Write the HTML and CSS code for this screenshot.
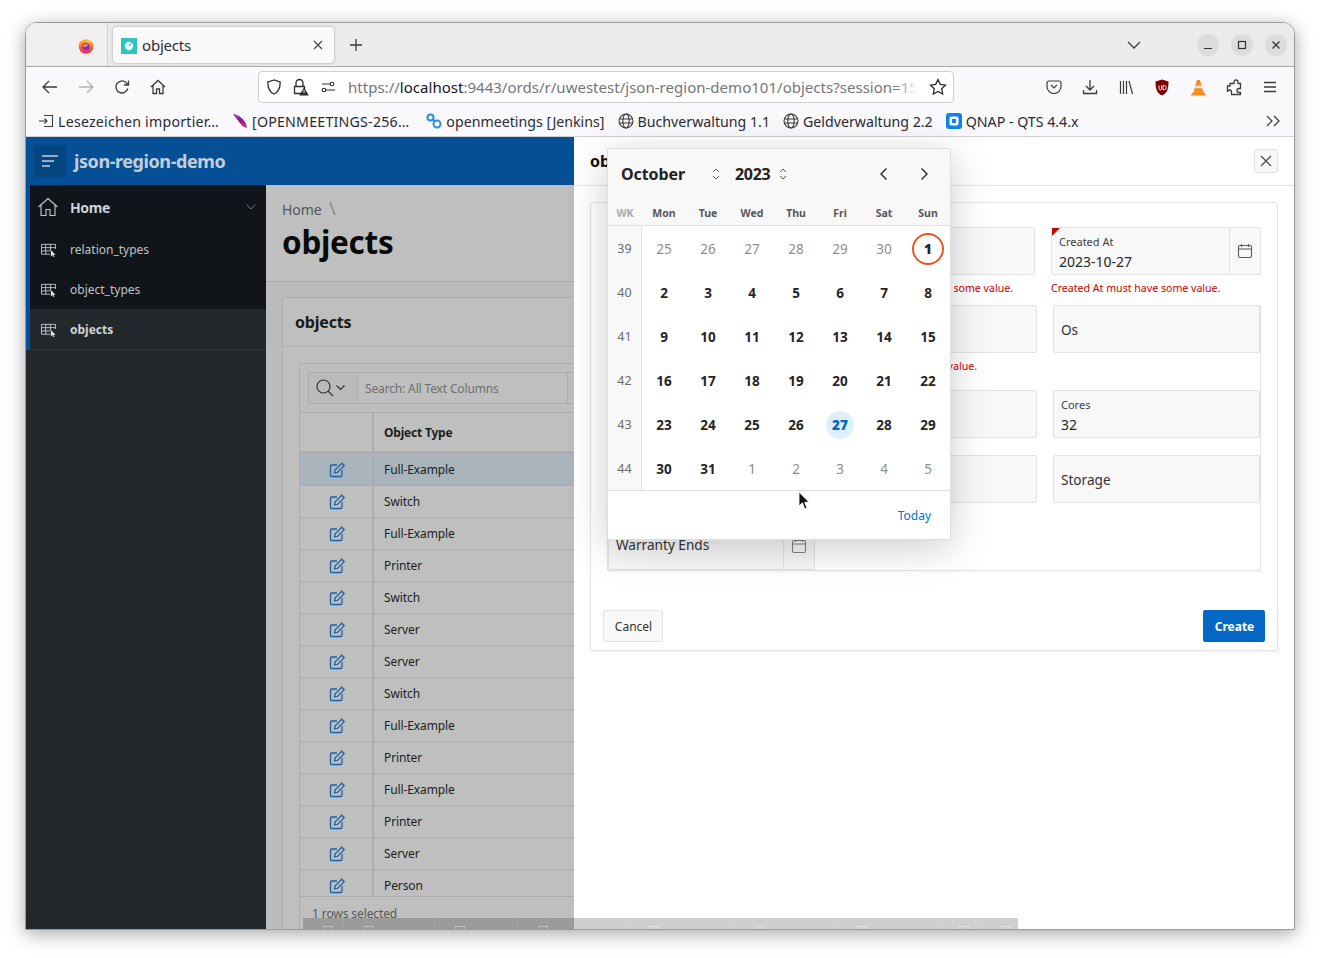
FILE: index.html
```html
<!DOCTYPE html>
<html lang="en">
<head>
  <meta charset="UTF-8">
  <title>objects</title>
  <link rel="stylesheet" href="styles.css">
</head>
<body>
  <svg class="defs" width="0" height="0">
    <defs>
      <linearGradient id="fox" x1="0" y1="0" x2="0" y2="1">
        <stop offset="0" stop-color="#ffbd2e"/>
        <stop offset=".5" stop-color="#ff6a2b"/>
        <stop offset="1" stop-color="#e5256a"/>
      </linearGradient>
      <symbol id="globe" viewBox="0 0 16 16"><g fill="none" stroke="#3a3a3f" stroke-width="1.1"><circle cx="8" cy="8" r="7"/><ellipse cx="8" cy="8" rx="3.2" ry="7"/><path d="M1 6h14M1 10h14"/></g></symbol>
      <symbol id="cal" viewBox="0 0 16 16"><g fill="none" stroke="#5a5a5a" stroke-width="1.1"><rect x="1.5" y="2.5" width="13" height="12" rx="1.5"/><path d="M1.5 6h13M4.5 1v3M11.5 1v3"/></g></symbol>
      <symbol id="edit" viewBox="0 0 16 16"><g fill="none" stroke="#1b62a8" stroke-width="1.3"><path d="M8 3H2.5A1 1 0 0 0 1.5 4v9.5a1 1 0 0 0 1 1H12a1 1 0 0 0 1-1V8"/><path d="M5.5 10.8 6 8 12.8 1.2l2.4 2.4L8.4 10.4z"/></g></symbol>
      <symbol id="menuicon" viewBox="0 0 18 16"><g fill="none" stroke="#bfc4c8" stroke-width="1"><path d="M1.5 2.5h15M1.5 6h15M1.5 9.5h9M1.5 13h9M1.5 2.5v10.5M6 2.5V13M11 2.5v7M16.5 2.5v5"/></g><path d="M11.5 8.5v7l1.7-1.6 1.2 2.4 1-.5-1.2-2.3h2.3z" fill="#e4e6e8"/></symbol>
      <symbol id="updown" viewBox="0 0 10 14"><path d="M2 5 5 2l3 3M2 9l3 3 3-3" fill="none" stroke="#555" stroke-width="1"/></symbol>
    </defs>
  </svg>

  <div class="window">
    <div class="tabbar">
      <div class="ffview">
        <svg width="16" height="16" viewBox="0 0 16 16"><circle cx="8" cy="8.5" r="7.3" fill="url(#fox)"/><path d="M9 .5c2 1.500 3.500 3 3.500 5l-3-2z" fill="#ffcf3f"/><circle cx="8" cy="8.700" r="3.600" fill="#7a2fd0"/><path d="M5 8c1-2 4-2.500 6-1-1 0-2 .5-2.500 1.500-.5.500-2.500 1-3.500-.5z" fill="#ff9a3c"/></svg>
      </div>
      <div class="tab">
        <span class="favicon"><svg width="16" height="16" viewBox="0 0 16 16"><rect width="16" height="16" fill="#2ec4bd"/><circle cx="8" cy="8" r="4.200" fill="#e8fbfa"/><path d="M8 8l2-2.500" stroke="#2ec4bd" stroke-width="1.200"/></svg></span>
        <span class="tab-title">objects</span>
        <svg class="tab-x" width="10" height="10" viewBox="0 0 10 10"><path d="M1 1l8 8M9 1l-8 8" stroke="#444" stroke-width="1.100"/></svg>
      </div>
      <svg class="plus" width="14" height="14" viewBox="0 0 14 14"><path d="M7 1v12M1 7h12" stroke="#3a3a3f" stroke-width="1.300"/></svg>
      <div class="tabbar-end">
        <svg class="alltabs" width="14" height="8" viewBox="0 0 14 8"><path d="M1 1l6 6 6-6" fill="none" stroke="#3a3a3f" stroke-width="1.300"/></svg>
        <span class="winbtn"><svg width="10" height="10" viewBox="0 0 10 10"><path d="M1 8.500h8" stroke="#333" stroke-width="1.200"/></svg></span>
        <span class="winbtn"><svg width="10" height="10" viewBox="0 0 10 10"><rect x="1.500" y="1.500" width="7" height="7" fill="none" stroke="#333" stroke-width="1.200"/></svg></span>
        <span class="winbtn"><svg width="10" height="10" viewBox="0 0 10 10"><path d="M1.500 1.500l7 7M8.500 1.500l-7 7" stroke="#333" stroke-width="1.300"/></svg></span>
      </div>
    </div>

    <div class="navbar">
      <span class="navbtn"><svg width="16" height="14" viewBox="0 0 16 14"><path d="M7 1 1 7l6 6M1 7h14" fill="none" stroke="#3a3a3f" stroke-width="1.300"/></svg></span>
      <span class="navbtn"><svg width="16" height="14" viewBox="0 0 16 14"><path d="M9 1l6 6-6 6M15 7H1" fill="none" stroke="#b4b4b8" stroke-width="1.300"/></svg></span>
      <span class="navbtn"><svg width="16" height="16" viewBox="0 0 16 16"><path d="M13.800 9.500A6 6 0 1 1 12 3.500L14.500 6M14.500 1.500V6H10" fill="none" stroke="#3a3a3f" stroke-width="1.300"/></svg></span>
      <span class="navbtn"><svg width="16" height="16" viewBox="0 0 16 16"><path d="M1 8l7-6.500L15 8M3 6.500V14.500h3.500V10h3v4.500H13V6.500" fill="none" stroke="#3a3a3f" stroke-width="1.300"/></svg></span>
      <div class="urlbar">
        <svg width="16" height="16" viewBox="0 0 16 16"><path d="M8 1 1.800 3c0 6 1 10 6.200 12 5.200-2 6.200-6 6.200-12z" fill="none" stroke="#2b2b30" stroke-width="1.300"/></svg>
        <svg class="lock" width="16" height="18" viewBox="0 0 16 18"><path d="M3 9V5a3.500 3.500 0 0 1 7 0v4M1.500 8.500h10v7h-10z" fill="none" stroke="#2b2b30" stroke-width="1.300"/><path d="M11 9.500l4.800 8H6.200z" fill="#2b2b30"/><path d="M11 12v3" stroke="#fff" stroke-width="1"/></svg>
        <svg class="perm" width="15" height="12" viewBox="0 0 15 12"><g fill="none" stroke="#2b2b30" stroke-width="1.100"><circle cx="11" cy="3" r="1.800"/><circle cx="3" cy="9" r="1.800"/><path d="M1 3h8M5 9h9"/></g></svg>
        <span class="url"><span class="url-dim">https://</span>localhost<span class="url-dim">:9443/ords/r/uwestest/json-region-demo101/objects?session=151</span></span>
        <span class="url-fade"></span>
        <svg width="18" height="18" viewBox="0 0 18 18"><path d="M9 1.500l2.300 4.900 5.200.7-3.800 3.600 1 5.300L9 13.400l-4.700 2.600 1-5.300L1.500 7.100l5.200-.7z" fill="none" stroke="#2b2b30" stroke-width="1.300"/></svg>
      </div>
      <div class="nav-tools">
        <span class="toolbtn"><svg width="16" height="14" viewBox="0 0 16 14"><path d="M1 3a2 2 0 0 1 2-2h10a2 2 0 0 1 2 2v3.500a7 7 0 0 1-14 0z" fill="none" stroke="#3a3a3f" stroke-width="1.200"/><path d="M5 5l3 3 3-3" fill="none" stroke="#3a3a3f" stroke-width="1.200"/></svg></span>
        <span class="toolbtn"><svg width="16" height="16" viewBox="0 0 16 16"><path d="M8 1v10M4 7l4 4 4-4M1.500 11v3.500h13V11" fill="none" stroke="#3a3a3f" stroke-width="1.300"/></svg></span>
        <span class="toolbtn"><svg width="15" height="15" viewBox="0 0 15 15"><path d="M1.500 1v13M4.500 1v13M7.500 1v13M10 1l3.500 13" fill="none" stroke="#3a3a3f" stroke-width="1.200"/></svg></span>
        <span class="toolbtn"><svg width="16" height="17" viewBox="0 0 16 17"><path d="M8 .5 1.500 2.500c0 7 1 11.500 6.500 14 5.500-2.500 6.500-7 6.500-14z" fill="#800000"/><path d="M5 6.500v3.200a1.300 1.300 0 0 0 2.600 0V6.500M9 6.500v4.200h1.200a2.100 2.100 0 0 0 0-4.200z" fill="none" stroke="#fff" stroke-width=".9"/></svg></span>
        <span class="toolbtn"><svg width="17" height="17" viewBox="0 0 17 17"><path d="M7 1h3l3.200 11.500H3.800z" fill="#f58a1f"/><path d="M5.600 7.200l5.800-1.400.8 3.400H5z" fill="#fde2c4"/><path d="M3.800 12.500h9.400L16.500 16.500H.5z" fill="#f58a1f"/></svg></span>
        <span class="toolbtn"><svg width="16" height="17" viewBox="0 0 16 17"><path d="M1.500 7H4V4.500h4V3a2 2 0 0 1 4 0v1.500h2.500v5H13a2 2 0 0 0 0 4h1.500V15.500h-9V13a1.800 1.800 0 0 0-4 0z" fill="none" stroke="#3a3a3f" stroke-width="1.300"/></svg></span>
        <span class="toolbtn"><svg width="14" height="12" viewBox="0 0 14 12"><path d="M1 1.500h12M1 6h12M1 10.500h12" stroke="#3a3a3f" stroke-width="1.300"/></svg></span>
      </div>
    </div>

    <div class="bookmarks">
      <span class="bm bm-wide"><svg width="16" height="14" viewBox="0 0 16 14"><path d="M6 1.500h8.500v11H6M1 7h8M6.500 4.500 9 7 6.500 9.500" fill="none" stroke="#3a3a3f" stroke-width="1.100"/></svg>Lesezeichen importier…</span>
      <span class="bm bm-wide"><svg width="16" height="16" viewBox="0 0 16 16"><path d="M1 1c5 .5 10 4 13 10l-3 2.500C8 10 4 5 1 1z" fill="#8a1f9c"/><path d="M8 8.500c1.500 2 3 3.500 3.500 5l3.500 1.500-1-4z" fill="#d8205a"/><path d="M2 1.500c2 .5 4 1.500 5 3.500z" fill="#f0903a"/></svg>[OPENMEETINGS-256…</span>
      <span class="bm bm-link"><svg width="16" height="16" viewBox="0 0 16 16"><g fill="none" stroke="#2a8fe0" stroke-width="2"><circle cx="4.500" cy="4.500" r="3"/><circle cx="11" cy="11" r="3.500"/><path d="M7 6.500l2 2"/></g></svg>openmeetings [Jenkins]</span>
      <span class="bm"><svg width="16" height="16"><use href="#globe"/></svg>Buchverwaltung 1.1</span>
      <span class="bm"><svg width="16" height="16"><use href="#globe"/></svg>Geldverwaltung 2.2</span>
      <span class="bm"><svg width="16" height="16" viewBox="0 0 16 16"><rect width="16" height="16" rx="3" fill="#0f83ee"/><rect x="3.500" y="3.500" width="9" height="9" rx="2" fill="#fff"/><rect x="6" y="6" width="4" height="4" fill="#0f83ee"/></svg>QNAP - QTS 4.4.x</span>
      <svg class="bm-more" width="15" height="12" viewBox="0 0 15 12"><path d="M1 1l5 5-5 5M8 1l5 5-5 5" fill="none" stroke="#3a3a3f" stroke-width="1.200"/></svg>
    </div>

    <div class="app">
      <div class="app-header">
        <span class="hamburger"><svg width="16" height="12" viewBox="0 0 16 12"><path d="M0 1h16M0 6h12M0 11h8" stroke="#c3cedb" stroke-width="1.600"/></svg></span>
        <span class="app-name">json-region-demo</span>
      </div>
      <div class="app-body">
        <nav class="sidebar">
          <div class="nav-tree">
            <div class="nav-item nav-home">
              <svg width="20" height="20" viewBox="0 0 20 20"><path d="M0.500 10 10 1.500 19.500 10M3 8v10.500h5v-6h4v6h5V8" fill="none" stroke="#c8ccd0" stroke-width="1.100"/></svg>
              <span>Home</span>
              <svg class="nav-caret" width="10" height="6" viewBox="0 0 10 6"><path d="M.5.500 5 5 9.500.5" fill="none" stroke="#70757a" stroke-width="1"/></svg>
            </div>
            <div class="nav-item"><svg width="17" height="15"><use href="#menuicon"/></svg><span>relation_types</span></div>
            <div class="nav-item"><svg width="17" height="15"><use href="#menuicon"/></svg><span>object_types</span></div>
            <div class="nav-item nav-current"><svg width="17" height="15"><use href="#menuicon"/></svg><span>objects</span></div>
          </div>
        </nav>

        <main class="page">
          <div class="page-head">
            <div class="crumbs">Home <i>\</i></div>
            <h1>objects</h1>
          </div>
          <section class="region">
            <h2>objects</h2>
            <div class="grid-wrap">
              <div class="ig">
                <div class="ig-toolbar">
                  <div class="ig-search">
                    <span class="ig-searchbtn">
                      <svg width="18" height="18" viewBox="0 0 18 18"><circle cx="7.500" cy="7.500" r="6.500" fill="none" stroke="#2f2f2f" stroke-width="1.100"/><path d="M12 12l5 5" stroke="#2f2f2f" stroke-width="1.100"/></svg>
                      <svg width="9" height="6" viewBox="0 0 9 6"><path d="M.5.500 4.500 4.500 8.500.5" fill="none" stroke="#2f2f2f" stroke-width="1.100"/></svg>
                    </span>
                    <span class="ig-input">Search: All Text Columns</span>
                    <span class="ig-next"></span>
                  </div>
                </div>
                <div class="ig-head"><span class="ig-cell-edit"></span><span class="ig-cell">Object Type</span></div>
                <div class="ig-row ig-row-sel"><span class="ig-cell-edit"><svg width="16" height="16"><use href="#edit"/></svg></span><span class="ig-cell">Full-Example</span></div>
                <div class="ig-row"><span class="ig-cell-edit"><svg width="16" height="16"><use href="#edit"/></svg></span><span class="ig-cell">Switch</span></div>
                <div class="ig-row"><span class="ig-cell-edit"><svg width="16" height="16"><use href="#edit"/></svg></span><span class="ig-cell">Full-Example</span></div>
                <div class="ig-row"><span class="ig-cell-edit"><svg width="16" height="16"><use href="#edit"/></svg></span><span class="ig-cell">Printer</span></div>
                <div class="ig-row"><span class="ig-cell-edit"><svg width="16" height="16"><use href="#edit"/></svg></span><span class="ig-cell">Switch</span></div>
                <div class="ig-row"><span class="ig-cell-edit"><svg width="16" height="16"><use href="#edit"/></svg></span><span class="ig-cell">Server</span></div>
                <div class="ig-row"><span class="ig-cell-edit"><svg width="16" height="16"><use href="#edit"/></svg></span><span class="ig-cell">Server</span></div>
                <div class="ig-row"><span class="ig-cell-edit"><svg width="16" height="16"><use href="#edit"/></svg></span><span class="ig-cell">Switch</span></div>
                <div class="ig-row"><span class="ig-cell-edit"><svg width="16" height="16"><use href="#edit"/></svg></span><span class="ig-cell">Full-Example</span></div>
                <div class="ig-row"><span class="ig-cell-edit"><svg width="16" height="16"><use href="#edit"/></svg></span><span class="ig-cell">Printer</span></div>
                <div class="ig-row"><span class="ig-cell-edit"><svg width="16" height="16"><use href="#edit"/></svg></span><span class="ig-cell">Full-Example</span></div>
                <div class="ig-row"><span class="ig-cell-edit"><svg width="16" height="16"><use href="#edit"/></svg></span><span class="ig-cell">Printer</span></div>
                <div class="ig-row"><span class="ig-cell-edit"><svg width="16" height="16"><use href="#edit"/></svg></span><span class="ig-cell">Server</span></div>
                <div class="ig-row ig-row-last"><span class="ig-cell-edit"><svg width="16" height="16"><use href="#edit"/></svg></span><span class="ig-cell">Person</span></div>
                <div class="ig-foot">1 rows selected</div>
              </div>
            </div>
          </section>
        </main>
      </div>

      <aside class="drawer">
        <div class="drawer-head">
          <span class="drawer-title">objects</span>
          <span class="drawer-close"><svg width="12" height="12" viewBox="0 0 12 12"><path d="M1 1l10 10M11 1 1 11" stroke="#444" stroke-width="1.100"/></svg></span>
        </div>
        <div class="drawer-body">
          <div class="form-card">
            <div class="form-top">
              <div class="field-col"><div class="field field-req"></div></div>
              <div class="field-col">
                <div class="field"></div>
                <div class="err err-mid">e some value.</div>
              </div>
              <div class="field-col">
                <div class="field-split field-req">
                  <div class="field-main"><label>Created At</label><span class="value">2023-10-27</span></div>
                  <span class="cal-btn"><svg width="16" height="16"><use href="#cal"/></svg></span>
                </div>
                <div class="err">Created At must have some value.</div>
              </div>
            </div>
            <div class="form-nested">
              <div class="nested-row nested-first">
                <div class="field-col"><div class="field"></div><div class="err err-left">value.</div></div>
                <div class="field"><span class="placeholder">Os</span></div>
              </div>
              <div class="nested-row nested-second">
                <div class="field"></div>
                <div class="field"><label>Cores</label><span class="value">32</span></div>
              </div>
              <div class="nested-row nested-third">
                <div class="field"></div>
                <div class="field"><span class="placeholder">Storage</span></div>
              </div>
              <div class="warranty">
                <div class="field-main"><span class="placeholder">Warranty Ends</span></div>
                <span class="cal-btn"><svg width="16" height="16"><use href="#cal"/></svg></span>
              </div>
            </div>
            <div class="form-actions">
              <button class="btn">Cancel</button>
              <button class="btn btn-hot">Create</button>
            </div>
          </div>
        </div>
      </aside>

      <div class="calendar">
        <div class="cal-head">
          <span class="cal-month">October</span>
          <svg class="cal-updown1" width="10" height="14"><use href="#updown"/></svg>
          <span class="cal-year">2023</span>
          <svg class="cal-updown2" width="10" height="14"><use href="#updown"/></svg>
          <svg class="cal-prev" width="9" height="14" viewBox="0 0 9 14"><path d="M7.500 1.500 2 7l5.500 5.500" fill="none" stroke="#262626" stroke-width="1.400"/></svg>
          <svg class="cal-nxt" width="9" height="14" viewBox="0 0 9 14"><path d="M1.500 1.500 7 7l-5.500 5.500" fill="none" stroke="#262626" stroke-width="1.400"/></svg>
        </div>
        <div class="cal-grid cal-days">
          <span class="wk-h">WK</span><span>Mon</span><span>Tue</span><span>Wed</span><span>Thu</span><span>Fri</span><span>Sat</span><span>Sun</span>
        </div>
        <div class="cal-grid cal-week"><span class="wk">39</span><span class="off">25</span><span class="off">26</span><span class="off">27</span><span class="off">28</span><span class="off">29</span><span class="off">30</span><span><b class="today">1</b></span></div>
        <div class="cal-grid cal-week"><span class="wk">40</span><span>2</span><span>3</span><span>4</span><span>5</span><span>6</span><span>7</span><span>8</span></div>
        <div class="cal-grid cal-week"><span class="wk">41</span><span>9</span><span>10</span><span>11</span><span>12</span><span>13</span><span>14</span><span>15</span></div>
        <div class="cal-grid cal-week"><span class="wk">42</span><span>16</span><span>17</span><span>18</span><span>19</span><span>20</span><span>21</span><span>22</span></div>
        <div class="cal-grid cal-week"><span class="wk">43</span><span>23</span><span>24</span><span>25</span><span>26</span><span><b class="picked">27</b></span><span>28</span><span>29</span></div>
        <div class="cal-grid cal-week"><span class="wk">44</span><span>30</span><span>31</span><span class="off">1</span><span class="off">2</span><span class="off">3</span><span class="off">4</span><span class="off">5</span></div>
        <div class="cal-foot"><span>Today</span></div>
      </div>

      <svg class="cursor" width="12" height="19" viewBox="0 0 12 19"><path d="M1 1v14l3.400-3.200L6.800 18l2.200-1-2.400-5.700H11z" fill="#111" stroke="#fff" stroke-width=".8"/></svg>

      <div class="dock">
        <span><i></i></span><span><i></i></span><span><i></i></span><span><i></i></span><span></span><span><i></i></span><span><i></i></span><span><i></i></span><span><i></i></span><span><i></i></span>
      </div>
    </div>
  </div>
</body>
</html>
```

FILE: styles.css
```css
* { box-sizing: border-box; }

html, body { height: 100%; }

body {
  margin: 0;
  padding: 22px 0 0 25px;
  background: #fff;
  font-family: "Noto Sans", "Open Sans", sans-serif;
  color: #262626;
  overflow: hidden;
}

.defs { position: absolute; }

.window {
  width: 1270px;
  height: 908px;
  border: 1px solid #9b9b9b;
  border-radius: 12px 12px 0 0;
  background: #fff;
  box-shadow: 0 4px 18px rgba(0, 0, 0, 0.35);
  overflow: hidden;
  display: flex;
  flex-direction: column;
}

/* tab bar */
.tabbar {
  height: 44px;
  flex: none;
  display: flex;
  align-items: center;
  background: #ebebeb;
  border-bottom: 1px solid #a9a9a9;
}
.ffview {
  width: 82px;
  height: 100%;
  padding: 14px 0 0 52px;
  border-right: 1px solid #cfcfcf;
  background: #efefef;
}
.tab {
  width: 221px;
  height: 36px;
  margin-left: 5px;
  padding: 0 8px;
  display: flex;
  align-items: center;
  background: #fafafa;
  border-radius: 4px;
  box-shadow: 0 0 3px rgba(0, 0, 0, 0.3);
}
.favicon { width: 16px; height: 16px; }
.tab-title { margin-left: 5px; font-size: 15px; flex: 1; color: #2b2b33; letter-spacing: -0.2px; }
.tab-x { margin-right: 3px; }
.plus { margin-left: 15px; }
.tabbar-end {
  margin-left: auto;
  padding-right: 7px;
  display: flex;
  align-items: center;
  gap: 12px;
}
.alltabs { margin-right: 44px; }
.winbtn {
  width: 22px;
  height: 22px;
  border-radius: 50%;
  background: #dcdcdc;
  display: flex;
  align-items: center;
  justify-content: center;
}

/* nav bar */
.navbar {
  height: 38px;
  flex: none;
  padding: 2px 0 0 6px;
  display: flex;
  align-items: center;
  background: #f9f9fb;
}
.navbtn { width: 36px; display: flex; justify-content: center; }
.urlbar {
  width: 696px;
  height: 32px;
  margin-left: 82px;
  padding: 0 6px 0 7px;
  position: relative;
  display: flex;
  align-items: center;
  background: #fff;
  border: 1px solid #cfcfd2;
  border-radius: 4px;
}
.lock { margin-left: 11px; }
.perm { margin-left: 12px; }
.url {
  flex: 1;
  min-width: 0;
  margin: 0 11px 0 12px;
  font-size: 15px;
  color: #15141a;
  white-space: nowrap;
  overflow: hidden;
  letter-spacing: 0.02px;
}
.url-dim { color: #74747a; }
.url-fade {
  position: absolute;
  right: 30px;
  top: 2px;
  width: 28px;
  height: 26px;
  background: linear-gradient(90deg, rgba(255, 255, 255, 0), #fff 80%);
}
.nav-tools { margin-left: 82px; display: flex; }
.toolbtn { width: 36px; height: 20px; display: flex; align-items: center; justify-content: center; }

/* bookmarks */
.bookmarks {
  height: 32px;
  flex: none;
  padding: 1px 13px 0 12px;
  display: flex;
  align-items: center;
  gap: 13px;
  background: #f9f9fb;
  border-bottom: 1px solid #cfcfd2;
}
.bm {
  display: flex;
  align-items: center;
  gap: 4px;
  font-size: 14.2px;
  color: #2b2b33;
  white-space: nowrap;
}
.bm-wide { letter-spacing: 0.22px; }
.bm-link { margin-left: 4px; }
.bm-more { margin-left: auto; }

/* apex shell */
.app {
  flex: 1;
  min-height: 0;
  position: relative;
  display: flex;
  flex-direction: column;
}
.app-header {
  height: 48px;
  flex: none;
  padding-left: 8px;
  display: flex;
  align-items: center;
  background: #054f96;
}
.hamburger {
  width: 32px;
  height: 32px;
  margin-right: 8px;
  display: flex;
  align-items: center;
  justify-content: center;
  background: #054680;
  border-radius: 2px;
}
.app-name { font-size: 18px; font-weight: 700; color: #c3cedb; letter-spacing: -0.42px; }
.app-body { flex: 1; min-height: 0; display: flex; }

.sidebar {
  width: 240px;
  flex: none;
  background: #21272b;
}
.nav-tree {
  border-left: 4px solid #054f96;
  background: #111418;
}
.nav-item {
  height: 40px;
  padding-left: 10px;
  display: flex;
  align-items: center;
  gap: 13px;
  font-size: 12px;
  color: #bfc4c8;
}
.nav-home {
  height: 44px;
  padding-left: 8px;
  gap: 12px;
  font-size: 14px;
  font-weight: 700;
  color: #cfd3d6;
  letter-spacing: -0.4px;
}
.nav-caret { margin-left: auto; margin-right: 10px; }
.nav-current {
  background: #22282c;
  border-bottom: 1px solid #2f3539;
  height: 41px;
  color: #cfd3d6;
  font-weight: 700;
}

.page { flex: 1; min-width: 0; background: #bcbcbc; }
.page-head {
  height: 97px;
  padding: 16px 16px 0;
  background: #bfbfbf;
  border-bottom: 1px solid #acacac;
}
.crumbs { height: 18px; font-size: 14px; color: #565656; line-height: 18px; letter-spacing: -0.1px; }
.crumbs i { margin-left: 4px; color: #8a8a8a; font-style: normal; font-size: 18px; line-height: 0; }
h1 {
  margin: 3px 0 0;
  font-size: 31.5px;
  line-height: 40px;
  font-weight: 700;
  color: #0a0a0a;
  letter-spacing: -0.3px;
}
.region {
  width: 760px;
  margin: 15px 0 0 16px;
  background: #bfbfbf;
  border: 1px solid #adadad;
}
.region h2 {
  height: 49px;
  margin: 0;
  padding-left: 12px;
  font-size: 16px;
  font-weight: 700;
  line-height: 48px;
  color: #1a1a1a;
  letter-spacing: -0.2px;
  border-bottom: 1px solid #adadad;
}
.grid-wrap { padding: 16px 16px 0; }
.ig { border: 1px solid #adadad; border-bottom: 0; }
.ig-toolbar {
  height: 49px;
  padding: 8px;
  border-bottom: 1px solid #adadad;
}
.ig-search { display: flex; height: 32px; border: 1px solid #adadad; }
.ig-searchbtn {
  width: 49px;
  padding-left: 7px;
  display: flex;
  align-items: center;
  gap: 2px;
  background: #bbbbbb;
  border-right: 1px solid #adadad;
}
.ig-input {
  width: 210px;
  padding: 1px 0 0 7px;
  font-size: 12px;
  line-height: 30px;
  color: #6f6f6f;
  letter-spacing: -0.15px;
  border-right: 1px solid #adadad;
}
.ig-next { flex: 1; }
.ig-head, .ig-row { display: flex; font-size: 12px; color: #1d1d1d; letter-spacing: -0.1px; }
.ig-head {
  height: 41px;
  border-bottom: 3px solid #adadad;
  font-weight: 700;
  letter-spacing: -0.2px;
}
.ig-row { height: 32px; border-bottom: 1px solid #adadad; }
.ig-row-sel { background: #a9b4bd; }
.ig-row-last { height: 27px; }
.ig-cell-edit {
  width: 74px;
  flex: none;
  padding-left: 2px;
  display: flex;
  align-items: center;
  justify-content: center;
  border-right: 2px solid #adadad;
}
.ig-row-last .ig-cell-edit { padding-top: 5px; }
.ig-cell { padding-left: 10px; align-self: center; }
.ig-row-last .ig-cell { padding-top: 5px; }
.ig-foot { height: 36px; padding: 8px 0 0 12px; font-size: 12px; color: #565656; letter-spacing: -0.1px; }

/* drawer */
.drawer {
  position: absolute;
  top: 0;
  right: 0;
  bottom: 0;
  width: 720px;
  display: flex;
  flex-direction: column;
  background: #fff;
}
.drawer-head {
  height: 49px;
  flex: none;
  padding: 0 16px;
  display: flex;
  align-items: center;
  justify-content: space-between;
  border-bottom: 1px solid #e3e3e3;
}
.drawer-title { font-size: 16px; font-weight: 700; color: #111; }
.drawer-close {
  width: 24px;
  height: 24px;
  display: flex;
  align-items: center;
  justify-content: center;
  background: #f7f7f7;
  border: 1px solid #e3e3e3;
  border-radius: 2px;
}
.drawer-body { padding: 16px; }
.form-card {
  height: 449px;
  padding-top: 24px;
  border: 1px solid #e3e3e3;
  border-radius: 2px;
  box-shadow: 0 1px 2px rgba(0, 0, 0, 0.05);
}
.form-top {
  margin-left: 16px;
  width: 654px;
  display: grid;
  grid-template-columns: 222px 190px 210px;
  column-gap: 16px;
}
.field {
  height: 48px;
  padding: 6px 7px;
  background: #f8f8f8;
  border: 1px solid #e3e3e3;
  border-radius: 2px;
}
.field-req { position: relative; }
.field-req::before {
  content: "";
  position: absolute;
  top: 0;
  left: 0;
  border-top: 8px solid #cc0000;
  border-right: 8px solid transparent;
}
.field-split, .warranty {
  height: 48px;
  display: flex;
  background: #f8f8f8;
  border: 1px solid #e3e3e3;
  border-radius: 2px;
}
.field-main { flex: 1; min-width: 0; padding: 6px 7px; }
.warranty .field-main { padding-top: 4px; }
.warranty .cal-btn svg { opacity: 0.75; }
.cal-btn {
  width: 31px;
  flex: none;
  display: flex;
  align-items: center;
  justify-content: center;
  border-left: 1px solid #e3e3e3;
}
.field label, .field-main label {
  display: block;
  font-size: 11px;
  line-height: 16px;
  color: #404040;
}
.value {
  display: block;
  font-size: 14px;
  line-height: 24px;
  color: #262626;
}
.placeholder { display: block; font-size: 13.6px; line-height: 36px; color: #333; }
.err {
  margin-top: 5px;
  height: 16px;
  font-size: 10.6px;
  line-height: 16px;
  color: #cc0000;
  white-space: nowrap;
}
.err-mid { padding-right: 22px; text-align: right; }
.err-left { padding-right: 60px; text-align: right; }
.form-nested {
  height: 266px;
  margin: 9px 16px 0;
  border: 1px solid #e3e3e3;
  border-top: 0;
  border-radius: 0 0 2px 2px;
  box-shadow: 0 1px 2px rgba(0, 0, 0, 0.04);
}
.nested-row {
  display: grid;
  grid-template-columns: 429px 207px;
  column-gap: 16px;
}
.nested-first { height: 85px; }
.nested-second { height: 65px; }
.nested-third { height: 67px; }
.warranty { width: 207px; }
.form-actions {
  margin: 39px 12px 0;
  display: flex;
  justify-content: space-between;
}
.btn {
  height: 32px;
  width: 60px;
  padding: 0 0 0 1px;
  font: 12px "Noto Sans", sans-serif;
  color: #333;
  background: #f8f8f8;
  border: 1px solid #e3e3e3;
  border-radius: 2px;
}
.btn-hot {
  width: 62px;
  font-weight: 700;
  color: #fff;
  background: #0568c4;
  border-color: #0568c4;
}

/* date picker */
.calendar {
  position: absolute;
  left: 581px;
  top: 11px;
  width: 344px;
  height: 392px;
  display: flex;
  flex-direction: column;
  background: #fff;
  border: 1px solid #dedede;
  border-radius: 2px;
  box-shadow: 0 8px 40px rgba(0, 0, 0, 0.2);
}
.cal-head {
  height: 49px;
  flex: none;
  padding-left: 13px;
  display: flex;
  align-items: center;
  background: #f8f8f8;
}
.cal-month { width: 90px; font-size: 16px; font-weight: 700; color: #222; letter-spacing: -0.1px; }
.cal-updown1 { margin-right: 14px; }
.cal-year { font-size: 16px; font-weight: 700; color: #222; letter-spacing: -0.3px; }
.cal-updown2 { margin-left: 8px; margin-right: 91px; }
.cal-nxt { margin-left: 32px; }
.cal-grid {
  display: grid;
  grid-template-columns: 34px repeat(7, 44px);
  text-align: center;
}
.cal-days {
  height: 28px;
  flex: none;
  font-size: 10.5px;
  font-weight: 700;
  line-height: 30px;
  color: #565656;
  background: #f8f8f8;
  border-bottom: 1px solid #e3e3e3;
}
.wk-h { color: #a8a8a8; }
.cal-week {
  height: 44px;
  flex: none;
  font-size: 13.5px;
  font-weight: 700;
  color: #262626;
}
.cal-week span {
  padding-top: 2px;
  display: flex;
  align-items: center;
  justify-content: center;
}
.cal-week .wk {
  padding-top: 0;
  font-size: 12.5px;
  font-weight: 400;
  color: #6c6c6c;
  background: #f8f8f8;
  border-right: 1px solid #e3e3e3;
}
.cal-week .off { font-weight: 400; color: #8e8e8e; }
.today, .picked {
  display: flex;
  align-items: center;
  justify-content: center;
  border-radius: 50%;
}
.today { width: 32px; height: 32px; border: 2px solid #e9571f; }
.picked { width: 28px; height: 28px; margin-top: -1px; color: #0568c4; background: #dfeefb; }
.cal-foot {
  flex: 1;
  padding: 16px 19px 0 0;
  text-align: right;
  font-size: 12px;
  color: #0572ce;
  border-top: 1px solid #dedede;
}

.cursor { position: absolute; left: 772px; top: 354px; }

/* translucent bar clipped by the window */
.dock {
  position: absolute;
  left: 277px;
  bottom: 0;
  width: 715px;
  height: 11px;
  display: grid;
  grid-template-columns: 41px 91px 83px 30px 80px 107px 101px 103px 42px 37px;
  background: rgba(0, 0, 0, 0.19);
}
.dock span { border-right: 1px solid rgba(255, 255, 255, 0.08); position: relative; }
.dock i {
  position: absolute;
  left: 20px;
  bottom: 0;
  width: 10px;
  height: 3px;
  border: 1px solid rgba(255, 255, 255, 0.35);
  border-bottom: 0;
}
```
